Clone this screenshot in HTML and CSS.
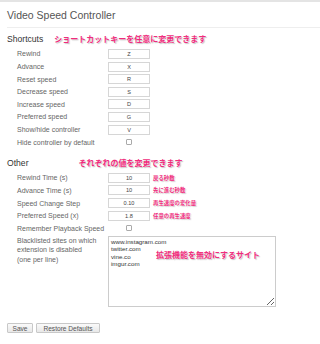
FILE: index.html
```html
<!DOCTYPE html>
<html lang="en">
<head>
  <meta charset="UTF-8">
  <title>Video Speed Controller</title>
  <link rel="stylesheet" href="styles.css">
</head>
<body>

  <div class="page">
    <h1>Video Speed Controller</h1>

    <!-- Atajos -->
    <div class="section-head">
      <h2>Shortcuts</h2>
      <span class="note note-shortcuts">ショートカットキーを任意に変更できます</span>
    </div>
    <div class="row"><label>Rewind</label><input class="key" type="text" value="Z"></div>
    <div class="row"><label>Advance</label><input class="key" type="text" value="X"></div>
    <div class="row"><label>Reset speed</label><input class="key" type="text" value="R"></div>
    <div class="row"><label>Decrease speed</label><input class="key" type="text" value="S"></div>
    <div class="row"><label>Increase speed</label><input class="key" type="text" value="D"></div>
    <div class="row"><label>Preferred speed</label><input class="key" type="text" value="G"></div>
    <div class="row"><label>Show/hide controller</label><input class="key" type="text" value="V"></div>
    <div class="row"><label>Hide controller by default</label><input class="check" type="checkbox"></div>

    <!-- Otros -->
    <div class="section-head other-head">
      <h2>Other</h2>
      <span class="note note-other">それぞれの値を変更できます</span>
    </div>
    <div class="row other-row"><label>Rewind Time (s)</label><input class="key" type="text" value="10"><span class="mini-note">戻る秒数</span></div>
    <div class="row other-row"><label>Advance Time (s)</label><input class="key" type="text" value="10"><span class="mini-note">先に進む秒数</span></div>
    <div class="row other-row"><label>Speed Change Step</label><input class="key" type="text" value="0.10"><span class="mini-note">再生速度の変化量</span></div>
    <div class="row other-row"><label>Preferred Speed (x)</label><input class="key" type="text" value="1.8"><span class="mini-note">任意の再生速度</span></div>
    <div class="row other-row"><label>Remember Playback Speed</label><input class="check" type="checkbox"></div>

    <div class="blacklist">
      <label>Blacklisted sites on which<br>extension is disabled<br>(one per line)</label>
      <textarea>www.instagram.com
twitter.com
vine.co
imgur.com</textarea>
      <span class="note note-blacklist">拡張機能を無効にするサイト</span>
    </div>

    <div class="buttons">
      <button class="btn-save">Save</button>
      <button class="btn-restore">Restore Defaults</button>
    </div>
  </div>

</body>
</html>
```

FILE: styles.css
```css
body {
  margin: 0;
  font-family: "Liberation Sans", Arial, sans-serif;
  background-color: #fff;
  color: #333;
}

.page {
  border-top: 2px solid #e4e4e4;
  padding-left: 7px;
  height: 342px;
}

h1 {
  margin: 0;
  padding: 7px 0 5px;
  font-size: 10.5px;
  line-height: 13px;
  font-weight: normal;
  color: #555;
  border-bottom: 1px solid #eee;
}

.section-head {
  display: flex;
  align-items: center;
  height: 12px;
  margin: 5px 0 2.7px;
}

.other-head {
  margin: 8.5px 0 2.4px;
}

h2 {
  margin: 0;
  font-size: 8.6px;
  font-weight: normal;
  color: #333;
}

.note {
  font-family: "Noto Sans CJK JP", sans-serif;
  font-weight: bold;
  font-size: 8px;
  line-height: 10px;
  color: #f02c7c;
  text-shadow: 0 0 1px #fff, 1px 1px 1px rgba(0, 0, 0, 0.25);
}

.note-shortcuts {
  margin-left: 11px;
}

.note-other {
  margin-left: 50px;
}

.row {
  display: flex;
  align-items: center;
  height: 12.6px;
}

.other-row {
  height: 12.7px;
}

.row label, .blacklist label {
  width: 91px;
  padding-left: 10px;
  font-size: 7px;
  color: #666;
}

.key {
  width: 42px;
  height: 10px;
  box-sizing: border-box;
  margin: 0;
  padding: 0;
  border: 1px solid #d6d6d6;
  font-family: "Liberation Sans", Arial, sans-serif;
  font-size: 5.6px;
  color: #444;
  text-align: center;
  background: #fff;
}

.check {
  appearance: none;
  width: 6px;
  height: 6px;
  margin: 0 0 0 18px;
  border: 1px solid #aaa;
  border-radius: 1px;
  background: #fff;
}

.mini-note {
  margin-left: 3px;
  font-family: "Noto Sans CJK JP", sans-serif;
  font-weight: bold;
  font-size: 5.4px;
  color: #f02c7c;
  text-shadow: 0 0 1px #fff, 1px 1px 1px rgba(0, 0, 0, 0.2);
}

.blacklist {
  position: relative;
  display: flex;
  align-items: flex-start;
  margin-top: 1.4px;
}

.blacklist label {
  line-height: 9.2px;
}

.blacklist textarea {
  width: 168px;
  height: 71px;
  box-sizing: border-box;
  margin: 0;
  padding: 1px 2px;
  border: 1px solid #ccc;
  font-family: "Liberation Sans", Arial, sans-serif;
  font-size: 6.2px;
  line-height: 7.2px;
  color: #333;
  resize: both;
}

.note-blacklist {
  position: absolute;
  left: 149px;
  top: 14px;
}

.buttons {
  display: flex;
  gap: 3px;
  margin-top: 16.3px;
}

.buttons button {
  height: 10px;
  padding: 0;
  border: 1px solid #c8c8c8;
  border-radius: 1px;
  background: linear-gradient(#fafafa, #e8e8e8);
  font-family: "Liberation Sans", Arial, sans-serif;
  font-size: 6.6px;
  color: #555;
}

.btn-save {
  width: 26px;
}

.btn-restore {
  width: 64px;
}
```
